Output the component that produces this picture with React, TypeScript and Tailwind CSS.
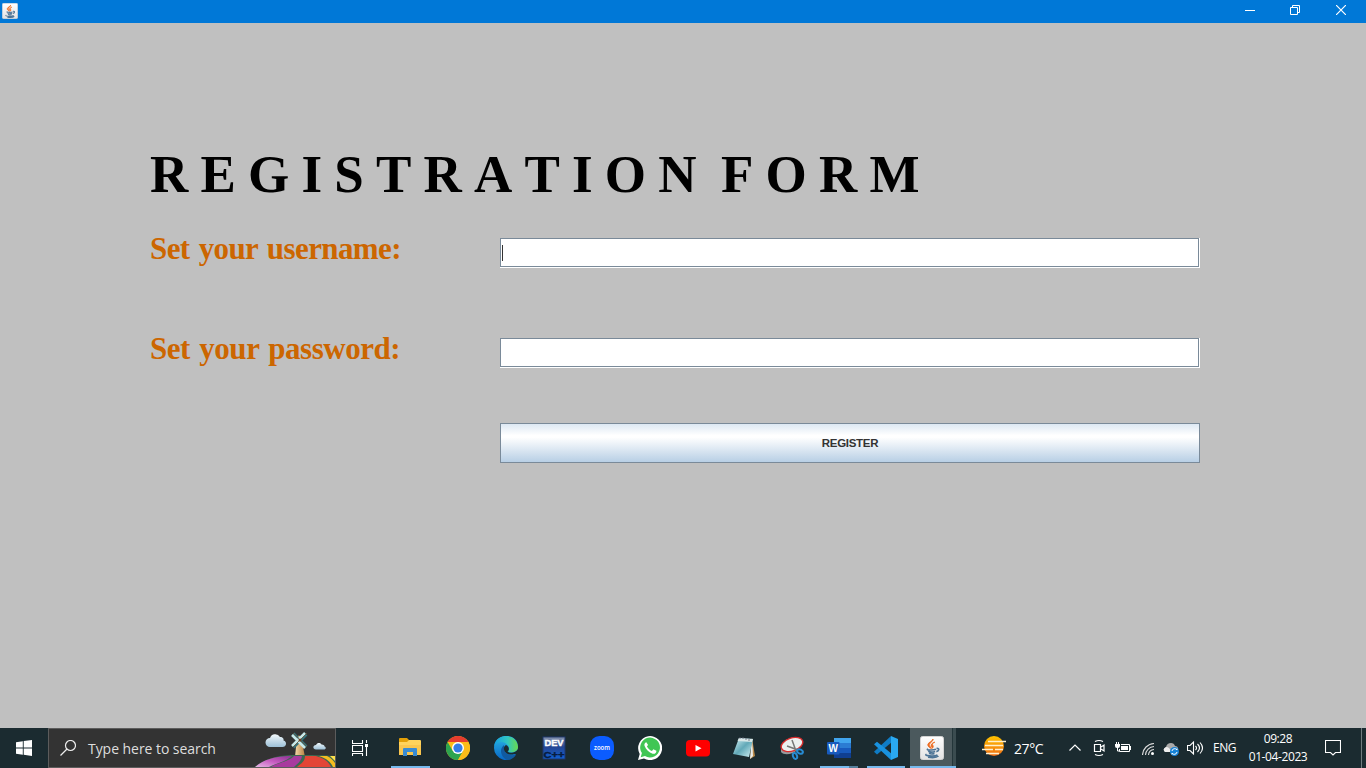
import React from 'react';

function Java({ className }: { className: string }) {
  return (
    <svg className={className} viewBox="0 0 24 24">
      <defs>
        <linearGradient id="jv" x1="0" y1="0" x2="0" y2="1"><stop offset="0" stopColor="#fff" /><stop offset="1" stopColor="#e2e2e2" /></linearGradient>
      </defs>
      <rect x=".5" y=".5" width="23" height="23" rx="2" fill="url(#jv)" stroke="#d4d4d4" />
      <path d="M13 3c.6 2.600-4.500 4-3.600 6.500.5 1.400 1.600 1.800 2 3-1.500-.8-4-2-3.500-4.200C8.500 6 12.600 5.500 13 3zM14.800 6.200c-3 1.200-2.600 2.200-1.900 3.200.6 1 .3 2-.6 2.900.1-1.200-1.600-1.900-1.100-3.400.4-1.200 1.700-2.200 3.600-2.700z" fill="#ed6b1f" stroke="#ed6b1f" strokeWidth=".9" />
      <path d="M8 13c-3 1 5 1.600 8 .3M8.200 15.200c1.500.9 5 .9 7 .2M9 17.300c1.500.7 4 .7 5.500.1M16.500 12.500c3.500-.6 2.600 2.600-.2 3.100M6.500 18.300c-3.500 1.500 8 2.600 11 .5M8 21.200c4 .6 9 .2 10.500-1.200" fill="none" stroke="#4c7395" strokeWidth="1.600" />
    </svg>
  );
}

function Field({ focused = false }: { focused?: boolean }) {
  return (
    <div className="mt-2 h-[30px] w-[700px] border-r border-b border-white bg-white">
      <div className="flex h-[29px] w-[699px] items-center border border-[#7a8a99] pl-px">
        {focused && <span className="h-4 w-px bg-[#333]" />}
      </div>
    </div>
  );
}

function Task({ children, line }: { children: React.ReactNode; line?: React.ReactNode }) {
  return (
    <div className="flex h-10 w-12 shrink-0 flex-col items-center">
      <div className="flex h-[38px] items-center pt-[2px]">{children}</div>
      {line}
    </div>
  );
}

const bar = <div className="h-[2px] w-[39px] bg-[#76b9ed]" />;
const ic = 'block h-6 w-6';

function SearchArt() {
  return (
    <svg className="block h-[38px] w-[80px]" viewBox="0 0 80 38">
      <defs>
        <linearGradient id="cl" x1="0" y1="0" x2="0" y2="1"><stop offset="0" stopColor="#f2f8fb" /><stop offset="1" stopColor="#9dc0d7" /></linearGradient>
        <linearGradient id="tw"><stop offset="0" stopColor="#f4d9a6" /><stop offset="1" stopColor="#b87f43" /></linearGradient>
        <linearGradient id="pu" x1="0" y1="1" x2="1" y2="0"><stop offset="0" stopColor="#e6b7e6" /><stop offset=".5" stopColor="#c65ac0" /><stop offset="1" stopColor="#8d3293" /></linearGradient>
      </defs>
      <path d="M15 18a4.500 4.500 0 0 1 0-9 5.500 5.500 0 0 1 10-1c3 0 4 2 3.500 3.500 4 1 3 6.500-1 6.500z" fill="url(#cl)" />
      <path d="M61 20.500c-3.500 0-3.500-4.500 0-4.500 1-3 5-2.500 5.500-.5 2.500 0 3 1 3 2 2 .5 1.500 3-.5 3z" fill="url(#cl)" />
      <path d="M40 28l2-20q2-3 4 0l4 20z" fill="url(#tw)" />
      <path d="M0 38c10-9 25-12 40-12 16 0 29 0 40 1v11z" fill="#3d6951" />
      <path d="M0 38c9-8 22-11 37-11-5 5-17 8-23 11z" fill="url(#pu)" />
      <path d="M16 38c6-4 19-6 23-11h8c-1 6-5 8-8 11z" fill="#a83a9e" />
      <path d="M42 38c5-4 8-6 8-11h11c8 2 13 6 15 11z" fill="#e34536" />
      <path d="M64 27h8c4 2 6 4 8 7v4h-2c-2-5-7-9-14-11z" fill="#f6bd20" />
      <path d="M75 27h5v5z" fill="#ffe04a" />
      <g stroke="#35737b" strokeWidth="4"><path d="M38 5l13 13M51 5L38 18" /></g>
      <g stroke="#c8e8e8" strokeWidth="2.500"><path d="M37 6l13 13M50 4L37 17" /></g>
      <path d="M38 4l14 14M52 4L38 18" stroke="#6b5035" strokeWidth=".8" />
      <circle cx="45" cy="11" r="1.500" fill="#704020" />
    </svg>
  );
}

export default function App() {
  return (
    <div className="flex h-[768px] w-[1366px] flex-col overflow-hidden bg-[#c0c0c0]">
      <header className="flex h-[23px] shrink-0 items-start justify-between bg-[#0078d7]">
        <Java className="mt-[3px] ml-[2px] block h-4 w-4" />
        <div className="flex">
          <div className="flex h-5 w-[46px] items-center justify-center"><svg className="block h-[10px] w-[10px]" viewBox="0 0 10 10"><path d="M0 5.500h10" stroke="white" /></svg></div>
          <div className="flex h-5 w-[44px] items-center justify-center"><svg className="block h-[10px] w-[10px]" viewBox="0 0 10 10"><path d="M.5 2.500h7v7h-7zM2.500 2.500v-2h7v7h-2" fill="none" stroke="white" /></svg></div>
          <div className="flex h-5 w-[48px] items-center justify-center pr-px"><svg className="block h-[10px] w-[10px]" viewBox="0 0 10 10"><path d="M0 0l10 10M10 0L0 10" stroke="white" strokeWidth="1.200" /></svg></div>
          <div className="w-px" />
        </div>
      </header>

      <main className="flex h-[705px] shrink-0 flex-col pl-[150px] font-['Liberation_Serif',serif] font-bold">
        <h1 className="mt-[120px] h-[62px] text-[53px] leading-[62px] whitespace-pre text-black [font-kerning:none] [word-spacing:-1.050px]">R E G I S T R A T I O N  F O R M</h1>
        <div className="mt-[25px] flex h-[100px] text-[#cc6600]">
          <label className="h-9 w-[350px] text-[31px] leading-[37px] tracking-[-0.600px] whitespace-nowrap [word-spacing:2px]">Set your username:</label>
          <Field focused />
        </div>
        <div className="flex h-[93px] text-[#cc6600]">
          <label className="h-9 w-[350px] text-[31px] leading-[37px] tracking-[-0.450px] whitespace-nowrap [word-spacing:2px]">Set your password:</label>
          <Field />
        </div>
        <button className="ml-[350px] h-10 w-[700px] border border-[#7a8a99] bg-[linear-gradient(#dde8f3_0%,#fff_30%,#fff_35%,#b8cfe5_100%)] pt-px font-['Liberation_Sans',sans-serif] text-[11.500px] font-bold tracking-[-0.300px] text-[#333]">REGISTER</button>
      </main>

      <footer className="flex h-10 shrink-0 bg-[#1b2b30] font-['Open_Sans',sans-serif] text-white">
        <div className="flex w-12 items-center justify-center">
          <svg className="block h-4 w-4" viewBox="0 0 16 16"><path d="M0 2.200L6.800 1.300v6.200H0zM7.700 1.100L16 0v7.500H7.700zM0 8.400h6.800v6.300L0 13.800zM7.700 8.400H16V16l-8.300-1.200z" fill="white" /></svg>
        </div>
        <div className="flex w-[288px] items-center justify-between border border-[#5c5c5c] bg-[#333]">
          <div className="flex items-center gap-[12px] pl-[11px] text-[14px] text-[#dedede]">
            <svg className="block h-4 w-4" viewBox="0 0 16 16"><circle cx="10.500" cy="5.500" r="5" fill="none" stroke="#eee" strokeWidth="1.200" /><path d="M7 9L.5 15.500" stroke="#eee" strokeWidth="1.300" /></svg>
            <span className="tracking-[-0.050px] whitespace-nowrap">Type here to search</span>
          </div>
          <SearchArt />
        </div>
        <Task><svg className="block h-4 w-4" viewBox="0 0 16 16"><path d="M.5 0v3.500h10V0M.5 5.500h10v6H.5zM.5 16v-2.500h10V16M14.500 0v3M14.500 7v9" fill="none" stroke="white" strokeWidth="1.100" /><path d="M13 4h3v3h-3z" fill="white" /></svg></Task>
        <div className="w-[2px]" />
        <Task line={bar}><svg className={ic} viewBox="0 0 24 24"><path d="M1 3q0-1 1-1h7l2 2h10v5H1z" fill="#e3a008" /><path d="M1 6h8l2-2h11q1 0 1 1v14H1z" fill="#ffd35c" /><path d="M1 9h22v10H1z" fill="#fac64e" /><path d="M5 20v-7q0-1 1-1h12q1 0 1 1v7h-4v-4H9v4z" fill="#398bd2" /></svg></Task>
        <Task><svg className={ic} viewBox="0 0 24 24"><circle cx="12" cy="12" r="12" fill="#fbbc19" /><path d="M1.600 6A12 12 0 0 1 22.400 6H12z" fill="#e53c2e" /><path d="M1.600 6A12 12 0 0 0 12 24l5.200-9L12 12 6.800 15z" fill="#2da44f" /><path d="M12 6h10.400A12 12 0 0 1 12 24l5.200-9z" fill="#fbbc19" /><circle cx="12" cy="12" r="6" fill="white" /><circle cx="12" cy="12" r="4.600" fill="#337de7" /></svg></Task>
        <Task><svg className={ic} viewBox="0 0 24 24"><defs><linearGradient id="ed"><stop stopColor="#159ee2" /><stop offset=".55" stopColor="#30c6c1" /><stop offset="1" stopColor="#6ad84d" /></linearGradient><linearGradient id="eb" x1="0" y1="0" x2="0" y2="1"><stop stopColor="#2bb6e5" /><stop offset="1" stopColor="#0867c5" /></linearGradient></defs><path d="M0 12C0-4 24-4 24 11c0 4-4 6-8 6l6 1.500A12 12 0 0 1 0 12z" fill="url(#eb)" /><path d="M.2 10C2-3 23-3 24 11c0 5-7 7-10.500 4 2-1 2-4 0-6C10 5 4 5 .2 10z" fill="url(#ed)" /><path d="M10 9c-6 5-2 13 3 15 4 0 7-2 9-5.500-4 1.500-9 .5-11-2.500-1-2-1-4-1-7z" fill="#115aa0" /><path d="M12 9c-4 2-2 9 4 9.500 3 .3 5-.5 6.500-1.500l1-3c-2 3.500-8 3.500-10 1.500 2-1 2-5-1.500-6.500z" fill="#1b2b30" /></svg></Task>
        <Task><svg className={ic} viewBox="0 0 24 24"><defs><linearGradient id="dv" x1="0" y1="0" x2="0" y2="1"><stop stopColor="#8996ae" /><stop offset=".45" stopColor="#254591" /><stop offset="1" stopColor="#1161d5" /></linearGradient></defs><rect x="1" y="1" width="22" height="22" fill="url(#dv)" stroke="#1f376d" /><text x="12" y="10.300" textAnchor="middle" textLength="19" lengthAdjust="spacingAndGlyphs" fontFamily="Liberation Sans" fontSize="9.500" fontWeight="bold" fill="white" stroke="white" strokeWidth=".4">DEV</text><text x="12" y="22.300" textAnchor="middle" textLength="21" lengthAdjust="spacingAndGlyphs" fontFamily="Liberation Sans" fontSize="9.500" fontWeight="bold" fill="#071c3f" stroke="#071c3f" strokeWidth=".4">C++</text></svg></Task>
        <Task><svg className={ic} viewBox="0 0 24 24"><rect width="24" height="24" rx="9.500" fill="#0b5cff" /><text x="12" y="13.500" textAnchor="middle" textLength="16" lengthAdjust="spacingAndGlyphs" fontFamily="Open Sans" fontSize="6.500" fontWeight="600" fill="white">zoom</text></svg></Task>
        <Task><svg className={ic} viewBox="0 0 24 24"><path d="M0 24l1.700-6A12 12 0 1 1 6 22.400z" fill="white" /><path d="M2.700 21.300l1.200-4.200A9.900 9.900 0 1 1 7 20z" fill="#40c654" /><path d="M8.300 6.300c-1.600.4-2.300 2-1.700 3.800 1.300 3.700 4.500 6.600 8 7.600 2.100.6 4-1 3.800-3l-3-1.500-1.500 1.800c-2.300-.8-4.100-2.600-5-4.700l1.200-1.300z" fill="white" /></svg></Task>
        <Task><svg className={ic} viewBox="0 0 24 24"><rect y="4" width="24" height="16.500" rx="4" fill="#f00" /><path d="M9.500 9l6 3.200-6 3.300z" fill="white" /></svg></Task>
        <Task><svg className="mr-1 block h-6 w-6" viewBox="0 0 24 24"><defs><linearGradient id="np" x1="0" y1="0" x2="1" y2="1"><stop stopColor="#d9f4f7" /><stop offset=".5" stopColor="#62a9b8" /><stop offset="1" stopColor="#d5f4f6" /></linearGradient></defs><path d="M20 2l3 18-5 3z" fill="#ba8a49" /><path d="M20 2l1 18-3 3z" fill="#e9edeb" /><path d="M7 2l14 1-4 18L1 18z" fill="url(#np)" /><path d="M7 2l14 1-1 3L5.500 5z" fill="#d8e7e7" /><path d="M8 1v2m3-2v2m3-1v2m3-1v2" stroke="#667" strokeWidth=".8" /></svg></Task>
        <Task><svg className="mr-1 block h-6 w-6" viewBox="0 0 24 24"><path d="M1 10v6c3 4 12 2 15-1l7-8z" fill="#96999d" /><ellipse cx="12" cy="8.500" rx="11.200" ry="6.500" transform="rotate(-19 12 8.500)" fill="#ecefef" stroke="#d92b2c" strokeWidth="1.400" /><path d="M12 4l4 11M7 10l11 4" stroke="#777" strokeWidth="1.500" /><g fill="none" stroke="#278bd3" strokeWidth="2"><ellipse cx="20" cy="15.500" rx="3" ry="2" transform="rotate(25 20 15.500)" /><ellipse cx="15" cy="20" rx="2" ry="3" transform="rotate(-20 15 20)" /></g></svg></Task>
        <div className="-ml-px"><Task line={<div className="mr-[4px] flex h-[2px] w-[38px] bg-[#557f9c]"><div className="w-[29px] bg-[#76b9ed]" /></div>}><svg className="mr-1 block h-6 w-6" viewBox="0 0 24 24"><path d="M7 2h17v20H7z" fill="#41a5ee" /><path d="M7 7h17v15H7z" fill="#2b7cd3" /><path d="M7 12h17v10H7z" fill="#185abd" /><path d="M7 17h17v5H7z" fill="#103f91" /><rect y="6" width="12.500" height="12.500" rx="1" fill="#185abd" /><text x="6.200" y="15.800" textAnchor="middle" fontFamily="Liberation Sans" fontSize="10" fontWeight="bold" fill="white">W</text></svg></Task></div>
        <div className="-ml-px"><Task line={<div className="mr-[4px] h-[2px] w-[38px] bg-[#76b9ed]" />}><svg className="mr-[4px] block h-6 w-6" viewBox="0 0 24 24"><path d="M0 15.800L17 0l1 6L3 18.400z" fill="#0f7cc5" /><path d="M3 5.700L0 8.300 17 24l1-6z" fill="#1992df" /><path d="M17 0l7 3v18l-7 3z" fill="#2aa9f1" /></svg></Task></div>
        <div className="-ml-[2px] flex w-[46px] flex-col bg-[#4b595d]">
          <div className="flex h-[38px] justify-between"><Java className="mt-2 ml-[10px] block h-6 w-6" /><div className="w-[4px] border-l border-[#24363a] bg-[#3b4c50]" /></div>
          <div className="h-[2px] bg-[#76b9ed]" />
        </div>
        <div className="ml-[26px] flex w-[87px] items-center gap-2">
          <svg className={ic} viewBox="0 0 24 24"><defs><linearGradient id="su" x1="0" y1="0" x2="0" y2="1"><stop stopColor="#ffc400" /><stop offset="1" stopColor="#f06b12" /></linearGradient></defs><circle cx="12" cy="10" r="10" fill="url(#su)" /><path d="M6 5.500h18M3 9.500h18M0 13.500h11M13 13.500h8M4 17.500h13" stroke="#fff0ce" strokeWidth="1.600" /></svg>
          <span className="text-[14px] tracking-[-0.400px]">27°C</span>
        </div>
        <svg className="my-auto block h-6 w-3" viewBox="0 0 12 24"><path d="M.5 14.500L6 9l5.500 5.500" fill="none" stroke="white" strokeWidth="1.200" /></svg>
        <svg className="my-auto ml-3 block h-6 w-3" viewBox="0 0 12 24"><path d="M1.500 8.500h6v7h-6zM8 11l3-2v6l-3-2M2 5.500q4-2 8 0M2 18.500q4 2 8 0" fill="none" stroke="white" strokeWidth="1.200" /></svg>
        <svg className="my-auto ml-[10px] block h-6 w-4" viewBox="0 0 16 24"><path d="M6 8.500h8.500v7h-10V13" fill="none" stroke="white" /><path d="M6 10h7v4H6zM15 10h1v4h-1zM0 8h5v2q0 2-2 2h-1Q0 12 0 10z" fill="white" /><path d="M1.500 8V6M3.500 8V6M2.500 12v3h2" fill="none" stroke="white" /></svg>
        <svg className="my-auto ml-[11px] block h-6 w-3" viewBox="0 0 12 24"><circle cx="10.500" cy="17.500" r="1.500" fill="white" /><path d="M.5 19A12 12 0 0 1 12 7.500M3.500 19a9 9 0 0 1 8.500-8.500M6.500 19a6 6 0 0 1 5.500-5.500" fill="none" stroke="#ddd" strokeWidth="1.100" /></svg>
        <svg className="my-auto ml-[9px] block h-6 w-4" viewBox="0 0 16 24"><path d="M4 16H2q-3-3 1-5 1-4 5-4 3 0 4 3 3 0 3 3v3z" fill="#aaa" /><path d="M2 16q-3-3 1-5 4 0 5 5z" fill="#eee" /><circle cx="11.500" cy="15.500" r="4.500" fill="#1683d8" /><path d="M9 15a2.700 2.700 0 0 1 5-1v-1.500M14 16a2.700 2.700 0 0 1-5 1v1.500" fill="none" stroke="white" /></svg>
        <svg className="my-auto ml-2 block h-6 w-4" viewBox="0 0 16 24"><path d="M.5 9.500H3L6.500 6v12L3 14.500H.5zM8.500 10q2 2 0 4M10.500 8q4 4 0 8M13 6.500q5 5.500 0 11" fill="none" stroke="white" strokeWidth="1.100" /></svg>
        <div className="ml-[10px] flex w-[28px] items-center text-[12px] tracking-[-0.500px]">ENG</div>
        <div className="ml-[5px] flex w-[64px] flex-col items-center pt-[2px] text-[12px] leading-[18px] tracking-[-0.400px] whitespace-nowrap"><span>09:28</span><span>01-04-2023</span></div>
        <svg className="my-auto ml-[15px] block h-6 w-4" viewBox="0 0 16 24"><path d="M.5 4.500h15v12h-5L8 19l-2.500-2.500h-5z" fill="none" stroke="white" strokeWidth="1.100" /></svg>
        <div className="ml-auto w-[5px] border-l border-[#6f7c7f]" />
      </footer>
    </div>
  );
}
